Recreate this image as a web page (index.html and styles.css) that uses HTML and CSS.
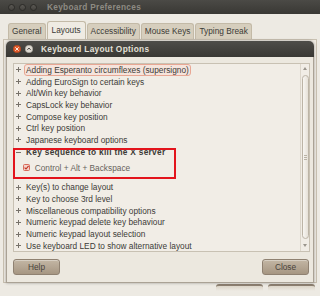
FILE: index.html
```html
<!DOCTYPE html>
<html lang="en">
<head>
    <meta charset="UTF-8">
    <meta name="viewport" content="width=device-width, initial-scale=1.0">
    <title>Keyboard Preferences</title>
    <link rel="stylesheet" href="styles.css">
</head>
<body>

    <!-- Jendela utama (di belakang) -->
    <div class="window">
        <div class="titlebar">
            <div class="wm-buttons">
                <span class="wm-btn"></span>
                <span class="wm-btn"></span>
                <span class="wm-btn"></span>
            </div>
            <span class="title">Keyboard Preferences</span>
        </div>

        <div class="tabs">
            <span class="tab">General</span>
            <span class="tab active">Layouts</span>
            <span class="tab">Accessibility</span>
            <span class="tab">Mouse Keys</span>
            <span class="tab">Typing Break</span>
        </div>

        <div class="panel"></div>

        <div class="footer">
            <span class="ghost-btn"></span>
            <span class="ghost-btn"></span>
        </div>
    </div>

    <!-- Dialog di atas jendela utama -->
    <div class="dialog">
        <div class="dialog-titlebar">
            <span class="dlg-btn">
                <svg width="8" height="8" viewBox="0 0 8 8">
                    <circle cx="4" cy="4" r="3.8" fill="#df5a2a" stroke="#a8401c" stroke-width="0.5"/>
                    <path d="M2.6 2.6 L5.4 5.4 M5.4 2.6 L2.6 5.4" stroke="#fbe9e0" stroke-width="1" stroke-linecap="round"/>
                </svg>
            </span>
            <span class="dlg-btn">
                <svg width="8" height="8" viewBox="0 0 8 8">
                    <circle cx="4" cy="4" r="3.8" fill="#dedad2" stroke="#9c988f" stroke-width="0.5"/>
                    <path d="M2.4 4.8 L4 3 L5.6 4.8" fill="none" stroke="#4a4843" stroke-width="1"/>
                </svg>
            </span>
            <span class="dialog-title">Keyboard Layout Options</span>
        </div>

        <div class="dialog-body">
            <div class="list">
                <div class="rows">
                    <div class="row"><span class="expander plus"></span><span class="label focused">Adding Esperanto circumflexes (supersigno)</span></div>
                    <div class="row"><span class="expander plus"></span><span class="label">Adding EuroSign to certain keys</span></div>
                    <div class="row"><span class="expander plus"></span><span class="label">Alt/Win key behavior</span></div>
                    <div class="row"><span class="expander plus"></span><span class="label">CapsLock key behavior</span></div>
                    <div class="row"><span class="expander plus"></span><span class="label">Compose key position</span></div>
                    <div class="row"><span class="expander plus"></span><span class="label">Ctrl key position</span></div>
                    <div class="row"><span class="expander plus"></span><span class="label">Japanese keyboard options</span></div>
                    <div class="row group"><span class="expander"></span><span class="label">Key sequence to kill the X server</span></div>
                    <div class="row option">
                        <svg class="check" width="7" height="7" viewBox="0 0 7 7">
                            <rect x="0.5" y="0.5" width="6" height="6" rx="1" fill="#f3d3ca" stroke="#d86a5b"/>
                            <path d="M1.6 3.6 L3 5 L5.6 1.8" fill="none" stroke="#c42f1f" stroke-width="1.1"/>
                        </svg>
                        <span class="label">Control + Alt + Backspace</span>
                    </div>
                    <div class="row"><span class="expander plus"></span><span class="label">Key(s) to change layout</span></div>
                    <div class="row"><span class="expander plus"></span><span class="label">Key to choose 3rd level</span></div>
                    <div class="row"><span class="expander plus"></span><span class="label">Miscellaneous compatibility options</span></div>
                    <div class="row"><span class="expander plus"></span><span class="label">Numeric keypad delete key behaviour</span></div>
                    <div class="row"><span class="expander plus"></span><span class="label">Numeric keypad layout selection</span></div>
                    <div class="row"><span class="expander plus"></span><span class="label">Use keyboard LED to show alternative layout</span></div>
                </div>

                <div class="scrollbar">
                    <span class="arrow up"></span>
                    <span class="thumb"><span class="grip"></span></span>
                    <span class="arrow down"></span>
                </div>

                <!-- Kotak merah penanda -->
                <div class="annotation"></div>
            </div>

            <div class="actions">
                <button class="btn">Help</button>
                <button class="btn">Close</button>
            </div>
        </div>
    </div>

</body>
</html>
```

FILE: styles.css
```css
/* Global Styles */
* {
    box-sizing: border-box;
}

body {
    margin: 0;
    width: 320px;
    height: 296px;
    overflow: hidden;
    position: relative;
    background-color: #edeae3;
    font-family: "Liberation Sans", Arial, sans-serif;
    font-size: 8.3px;
    color: #3c3b37;
}

/* Jendela utama */
.window {
    display: flex;
    flex-direction: column;
    height: 296px;
}

.titlebar {
    height: 14px;
    display: flex;
    align-items: center;
    padding-left: 8px;
    background: linear-gradient(#4b4a46, #393834);
}

.wm-buttons {
    display: flex;
    gap: 4px;
}

.wm-btn {
    width: 7px;
    height: 7px;
    border-radius: 50%;
    background: linear-gradient(#5a5853, #45433f);
    border: 1px solid #2c2b28;
}

.title {
    margin-left: 10px;
    font-weight: bold;
    letter-spacing: 0.3px;
    color: #8e8b83;
}

.tabs {
    height: 25px;
    display: flex;
    align-items: flex-end;
    gap: 1px;
    padding-left: 8px;
}

.tab {
    height: 16px;
    line-height: 15px;
    padding: 0 3px;
    background-color: #d6cebd;
    border: 1px solid #c3baa7;
    border-bottom: none;
    border-radius: 3px 3px 0 0;
}

.tab.active {
    height: 18px;
    line-height: 17px;
    padding: 0 4px;
    background-color: #efebe3;
}

.panel {
    flex: 1;
    margin: 0 3px;
    border: 1px solid #c9c1b2;
    background-color: #efebe3;
}

.footer {
    height: 13px;
    display: flex;
    justify-content: flex-end;
    gap: 5px;
    padding: 1px 5px 0 0;
}

.ghost-btn {
    width: 47px;
    height: 16px;
    border-top: 2px solid #8d8071;
    border-radius: 3px 3px 0 0;
    background: linear-gradient(#dcd5c8, #edeae3 5px);
}

/* Dialog */
.dialog {
    position: absolute;
    left: 6px;
    top: 41px;
    width: 308px;
    height: 242px;
    display: flex;
    flex-direction: column;
    border-radius: 5px 5px 0 0;
    box-shadow: 0 0 3px rgba(0, 0, 0, 0.35);
}

.dialog-titlebar {
    height: 16px;
    display: flex;
    align-items: center;
    padding-left: 7px;
    border-radius: 5px 5px 0 0;
    background: linear-gradient(#4e4d49, #393834);
}

.dlg-btn {
    width: 8px;
    height: 8px;
    margin-right: 3.5px;
    display: flex;
}

.dialog-title {
    margin-left: 5px;
    font-weight: bold;
    letter-spacing: 0.3px;
    color: #e4e0d8;
}

.dialog-body {
    flex: 1;
    padding: 6px 3px 0 6px;
    background-color: #ece8df;
    border: 1px solid #aaa295;
    border-top: none;
}

.list {
    position: relative;
    height: 189px;
    display: flex;
    border: 1px solid #c8c1b3;
    background-color: #f1ede6;
}

.rows {
    flex: 1;
}

.row {
    height: 11.7px;
    display: flex;
    align-items: center;
    white-space: nowrap;
}

.expander {
    position: relative;
    width: 5px;
    height: 5px;
    margin: 0 3px 0 2px;
}

.expander::before,
.plus::after {
    content: "";
    position: absolute;
    background-color: #77726a;
}

.expander::before {
    left: 0;
    top: 2px;
    width: 5px;
    height: 1px;
}

.plus::after {
    left: 2px;
    top: 0;
    width: 1px;
    height: 5px;
}

.label {
    padding: 0 1px;
    line-height: 10px;
    border: 1px solid transparent;
    border-radius: 3px;
}

.label.focused {
    border-color: #e8a794;
    background-color: #f6e4dc;
}

.row.group {
    height: 13px;
    font-weight: bold;
    letter-spacing: 0.3px;
}

.row.option {
    height: 18px;
    margin-bottom: 4.6px;
    color: #67635c;
}

.check {
    margin: 0 3px 0 8.7px;
}

/* Scrollbar */
.scrollbar {
    width: 9px;
    display: flex;
    flex-direction: column;
    align-items: center;
    border-left: 1px solid #dcd6cb;
}

.arrow {
    width: 0;
    height: 0;
    border-left: 2px solid transparent;
    border-right: 2px solid transparent;
}

.arrow.up {
    margin-top: 3px;
    border-bottom: 3px solid #9a958c;
}

.arrow.down {
    margin: 5px 0 4px;
    border-top: 3px solid #9a958c;
}

.thumb {
    flex: 1;
    width: 7px;
    margin-top: 5px;
    display: flex;
    align-items: center;
    justify-content: center;
    border: 1px solid #bcb4a6;
    border-radius: 4px;
    background: linear-gradient(90deg, #f8f6f2, #e6e1d8);
}

.grip {
    width: 3px;
    height: 5px;
    border-top: 1px solid #b9b2a5;
    border-bottom: 1px solid #b9b2a5;
    background: linear-gradient(transparent 1px, #b9b2a5 1px, #b9b2a5 2px, transparent 2px);
}

/* Kotak merah */
.annotation {
    position: absolute;
    left: -1px;
    top: 84px;
    width: 163px;
    height: 31px;
    border: 2px solid #e3141c;
}

/* Tombol */
.actions {
    display: flex;
    justify-content: space-between;
    margin-top: 7px;
    padding-right: 1px;
}

.btn {
    width: 47px;
    height: 16px;
    padding: 0;
    font-family: inherit;
    font-size: 8.3px;
    color: #48433c;
    border: 1px solid #8f8171;
    border-radius: 3px;
    background: linear-gradient(#c3b6a4, #a69682);
    box-shadow: inset 0 1px rgba(255, 255, 255, 0.35);
}
```
